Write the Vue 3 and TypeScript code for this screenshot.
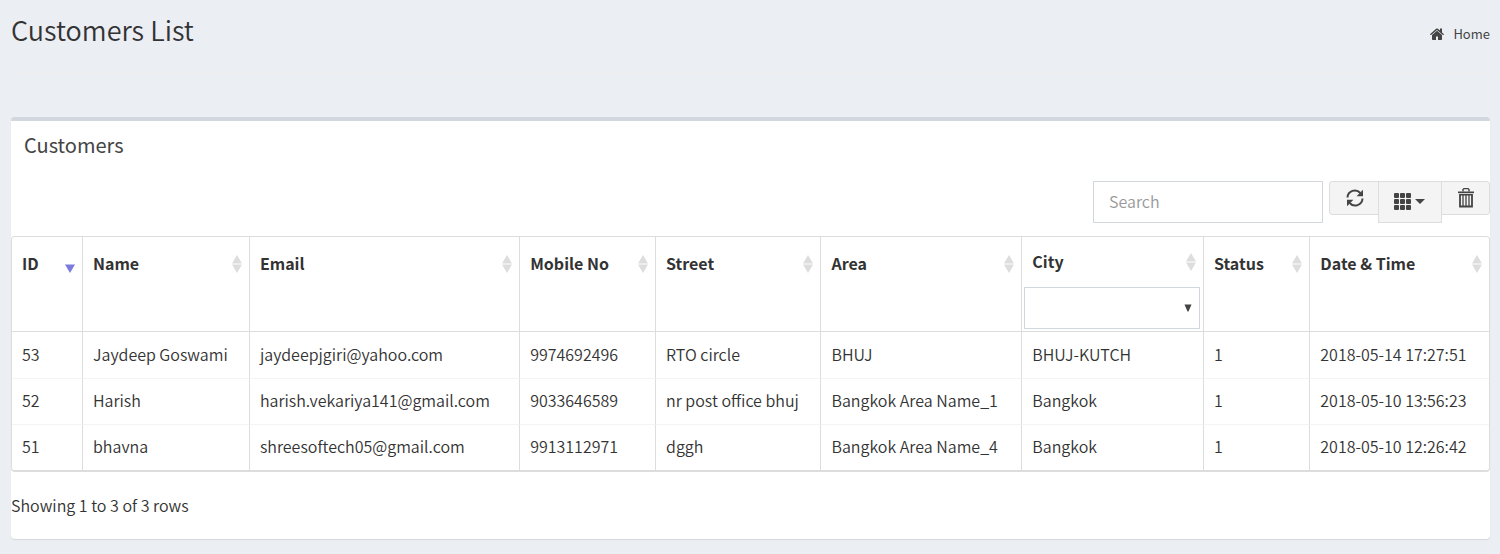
<script setup lang="ts">
import { computed, ref } from 'vue'

interface Customer {
  id: number
  name: string
  email: string
  mobile: string
  street: string
  area: string
  city: string
  status: number
  created: string
}

interface Column {
  key: keyof Customer
  label: string
}

const columns: Column[] = [
  { key: 'id', label: 'ID' },
  { key: 'name', label: 'Name' },
  { key: 'email', label: 'Email' },
  { key: 'mobile', label: 'Mobile No' },
  { key: 'street', label: 'Street' },
  { key: 'area', label: 'Area' },
  { key: 'city', label: 'City' },
  { key: 'status', label: 'Status' },
  { key: 'created', label: 'Date & Time' },
]

const customers: Customer[] = [
  { id: 53, name: 'Jaydeep Goswami', email: 'jaydeepjgiri@yahoo.com', mobile: '9974692496', street: 'RTO circle', area: 'BHUJ', city: 'BHUJ-KUTCH', status: 1, created: '2018-05-14 17:27:51' },
  { id: 52, name: 'Harish', email: 'harish.vekariya141@gmail.com', mobile: '9033646589', street: 'nr post office bhuj', area: 'Bangkok Area Name_1', city: 'Bangkok', status: 1, created: '2018-05-10 13:56:23' },
  { id: 51, name: 'bhavna', email: 'shreesoftech05@gmail.com', mobile: '9913112971', street: 'dggh', area: 'Bangkok Area Name_4', city: 'Bangkok', status: 1, created: '2018-05-10 12:26:42' },
]

const search = ref('')
const cityFilter = ref('')
const sortKey = ref<keyof Customer>('id')
const descending = ref(true)

const cities = [...new Set(customers.map((c) => c.city))]

const rows = computed(() => {
  const term = search.value.toLowerCase()
  return customers
    .filter((c) => !cityFilter.value || c.city === cityFilter.value)
    .filter((c) => Object.values(c).some((v) => String(v).toLowerCase().includes(term)))
    .sort((a, b) => {
      const order = String(a[sortKey.value]).localeCompare(String(b[sortKey.value]), undefined, { numeric: true })
      return descending.value ? -order : order
    })
})

function sortBy(key: keyof Customer) {
  descending.value = sortKey.value === key ? !descending.value : false
  sortKey.value = key
}

function reset() {
  search.value = ''
  cityFilter.value = ''
}
</script>

<template>
  <div class="page">
    <header class="page-header">
      <h1>Customers List</h1>
      <nav aria-label="Breadcrumb">
        <a href="#" class="home">
          <svg viewBox="0 0 14 12" width="14" height="12" aria-hidden="true">
            <path d="M7 2.8 2 7v4.3c0 .4.3.7.7.7H6V8.5h2V12h3.3c.4 0 .7-.3.7-.7V7z" />
            <path d="M13.8 5.9 12 4.4V.7c0-.2-.1-.3-.3-.3h-1.4c-.2 0-.3.1-.3.3v1.9L7.9.8a1.4 1.4 0 0 0-1.800 0L.2 5.9c-.2.1-.2.3-.1.5l.5.6c.1.1.3.1.5 0L7 2l5.9 5c.2.1.4.1.5 0l.5-.6c.1-.2.1-.4-.1-.5z" />
          </svg>
          Home
        </a>
      </nav>
    </header>

    <main class="panel">
      <h2>Customers</h2>
      <div class="toolbar">
        <input v-model="search" class="search" type="text" placeholder="Search" aria-label="Search" />
        <div class="buttons">
          <button type="button" class="first" title="Refresh" aria-label="Refresh" @click="reset">
            <svg viewBox="0 0 18 18" width="18" height="18" aria-hidden="true">
              <g fill="none" stroke="currentColor" stroke-width="2">
                <path d="M1.500 8.500A7.300 7.300 0 0 1 14.300 4" />
                <path d="M16.500 9.500A7.300 7.300 0 0 1 3.700 14" />
              </g>
              <path d="M17 .8v6.400h-6.400z" />
              <path d="M1 17.200v-6.400h6.400z" />
            </svg>
          </button>
          <button type="button" class="columns" title="Columns" aria-label="Columns">
            <svg viewBox="0 0 17 17" width="17" height="17" aria-hidden="true">
              <template v-for="y in [0, 6, 12]" :key="y">
                <rect v-for="x in [0, 6, 12]" :key="x" :x="x" :y="y" width="5" height="5" rx="1" />
              </template>
            </svg>
            <svg viewBox="0 0 10 5" width="10" height="5" aria-hidden="true"><path d="M0 0h10L5 5z" /></svg>
          </button>
          <button type="button" class="last" title="Delete" aria-label="Delete">
            <svg viewBox="0 0 18 20" width="18" height="20" aria-hidden="true">
              <path d="M1 3.500h16v1.700H1z" />
              <path d="M6 3.500V1.600L7 .600h4l1 1v1.900" fill="none" stroke="currentColor" stroke-width="1.400" />
              <path d="M3 6.500v12h12v-12" fill="none" stroke="currentColor" stroke-width="1.800" />
              <path d="M2.200 6h13.600v1.500H2.200z" />
              <path d="M6 7v11M9 7v11M12 7v11" fill="none" stroke="currentColor" stroke-width="1.300" />
            </svg>
          </button>
        </div>
      </div>

      <div class="table-frame">
        <table>
          <colgroup>
            <col v-for="c in columns" :key="c.key" :class="'col-' + c.key" />
          </colgroup>
          <thead>
            <tr>
              <th v-for="c in columns" :key="c.key" scope="col" :class="{ filtered: c.key === 'city' }">
                <button type="button" class="sort" @click="sortBy(c.key)">
                  {{ c.label }}
                  <svg v-if="sortKey === c.key" class="active" viewBox="0 0 10 18" width="10" height="18" aria-hidden="true">
                    <path v-if="descending" d="M0 9.500h10L5 18z" />
                    <path v-else d="M0 8.500h10L5 0z" />
                  </svg>
                  <svg v-else viewBox="0 0 10 18" width="10" height="18" aria-hidden="true">
                    <path d="M0 8.500h10L5 0zM0 9.500h10L5 18z" />
                  </svg>
                </button>
                <div v-if="c.key === 'city'" class="filter">
                  <select v-model="cityFilter" aria-label="Filter by city">
                    <option value=""></option>
                    <option v-for="city in cities" :key="city" :value="city">{{ city }}</option>
                  </select>
                  <svg viewBox="0 0 8 8" width="8" height="8" aria-hidden="true"><path d="M.5.5h7L4.500 7.500h-1z" /></svg>
                </div>
              </th>
            </tr>
          </thead>
          <tbody>
            <tr v-for="row in rows" :key="row.id">
              <td v-for="c in columns" :key="c.key">{{ row[c.key] }}</td>
            </tr>
          </tbody>
        </table>
      </div>

      <p class="summary">Showing {{ rows.length ? 1 : 0 }} to {{ rows.length }} of {{ rows.length }} rows</p>
    </main>
  </div>
</template>

<style>
body {
  margin: 0;
  background: #ebeef3;
}
</style>

<style scoped>
.page {
  box-sizing: border-box;
  padding: 0 10px 14px 11px;
  color: #333;
  font: 350 16px/24px "Noto Sans CJK SC", "Open Sans", sans-serif;
}
.page * {
  box-sizing: border-box;
}
svg {
  display: block;
  flex: none;
  fill: currentColor;
}
.page-header {
  display: flex;
  justify-content: space-between;
  align-items: flex-start;
  height: 73px;
  padding-top: 10px;
  margin-bottom: 44px;
  border-bottom: 1px solid #eee;
}
h1 {
  margin: 0;
  font-size: 27px;
  line-height: 40px;
  font-weight: 350;
}
.home {
  display: flex;
  align-items: center;
  gap: 9px;
  margin-top: 12px;
  color: #444;
  font-size: 13px;
  font-weight: 400;
  text-decoration: none;
}
.panel {
  border-top: 4px solid #d2d6de;
  border-radius: 4px;
  background: #fff;
  box-shadow: 0 1px 1px rgba(0, 0, 0, 0.1);
}
h2 {
  margin: 0;
  padding: 9px 13px 11px;
  color: #444;
  font-size: 20px;
  line-height: 30px;
  font-weight: 400;
}
.toolbar {
  display: flex;
  justify-content: flex-end;
  gap: 6px;
  padding-top: 10px;
}
.search {
  width: 230px;
  height: 42px;
  padding: 5px 15px 7px;
  border: 1px solid #d2d6de;
  border-radius: 0;
  background: #fff;
  color: #555;
  font: inherit;
}
.search::placeholder {
  color: #999;
  opacity: 1;
}
.buttons {
  display: flex;
  align-items: flex-start;
}
.buttons button {
  display: flex;
  align-items: center;
  justify-content: center;
  width: 50px;
  height: 34px;
  padding: 0 0 0 1px;
  border: 1px solid #ddd;
  background: #f4f4f4;
  color: #444;
}
.buttons button + button {
  margin-left: -1px;
}
.buttons .first {
  border-radius: 3px 0 0 3px;
}
.buttons .columns {
  width: 64px;
  height: 42px;
  padding: 0 2px 2px 0;
  gap: 4px;
}
.buttons .last {
  width: 49px;
  border-radius: 0 3px 3px 0;
}
.table-frame {
  margin-top: 13px;
  border: 1px solid #ddd;
  border-bottom-width: 2px;
  border-radius: 4px;
  overflow: hidden;
}
table {
  width: 100%;
  table-layout: fixed;
  border-collapse: separate;
  border-spacing: 0;
}
.col-id { width: 71px; }
.col-name { width: 11.3%; }
.col-email { width: 18.3%; }
.col-mobile { width: 9.2%; }
.col-street { width: 11.2%; }
.col-area { width: 13.6%; }
.col-city { width: 12.3%; }
.col-status { width: 7.2%; }
th,
td {
  text-align: left;
  border-right: 1px solid #ddd;
  white-space: nowrap;
}
th:last-child,
td:last-child {
  border-right: 0;
}
th {
  height: 95px;
  padding: 14px 7px 0 10px;
  border-bottom: 1px solid #ddd;
  vertical-align: top;
}
.sort {
  display: flex;
  align-items: center;
  justify-content: space-between;
  width: 100%;
  padding: 0;
  border: 0;
  background: none;
  color: inherit;
  font: inherit;
  font-weight: 700;
  cursor: pointer;
}
.sort svg {
  margin-top: 2px;
  color: #ddd;
}
.sort .active {
  color: #7b7be0;
}
.filtered {
  padding: 12px 3px 2px 2px;
}
.filtered .sort {
  padding: 0 4px 0 8px;
}
.filter {
  position: relative;
  margin-top: 14px;
}
.filter select {
  display: block;
  width: 100%;
  height: 42px;
  padding: 6px 24px 6px 12px;
  border: 1px solid #d2d6de;
  border-radius: 0;
  appearance: none;
  background: #fff;
  color: #555;
  font: inherit;
}
.filter svg {
  position: absolute;
  top: 17px;
  right: 8px;
  color: #444;
  pointer-events: none;
}
td {
  height: 46px;
  padding: 0 10px 3px;
}
tbody tr + tr td {
  border-top: 1px solid #f4f4f4;
}
.summary {
  margin: 0;
  padding: 21px 0 22px;
}
</style>
